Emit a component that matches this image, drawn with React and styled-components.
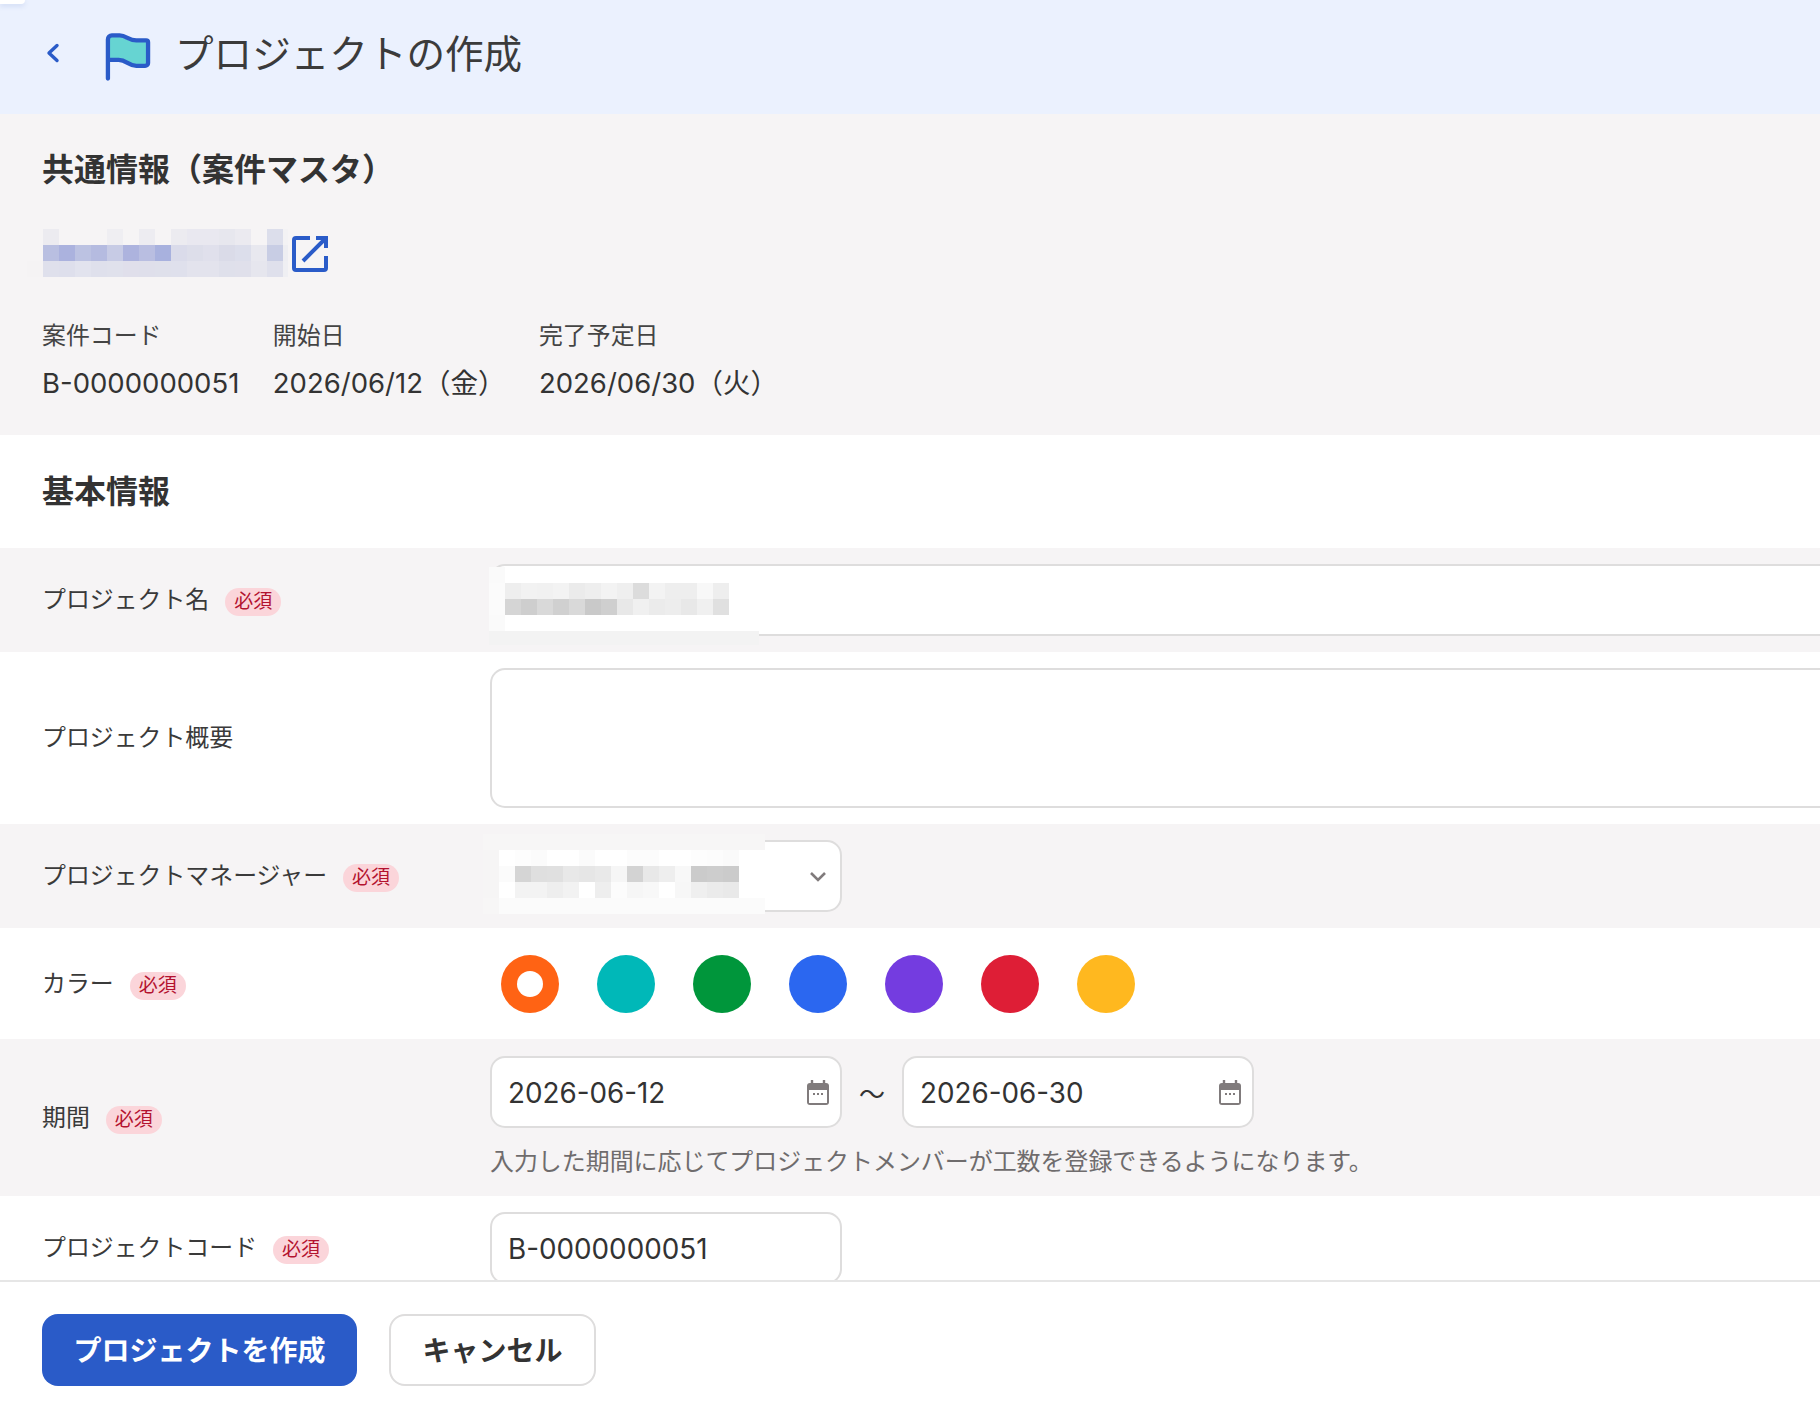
import React from "react";
import styled, { createGlobalStyle } from "styled-components";

const Global = createGlobalStyle`
  html, body { margin: 0; padding: 0; background: #fff; }
  body { font-family: Inter, "Noto Sans CJK JP", sans-serif; color: #333; }
  * { box-sizing: border-box; }
`;

const Page = styled.div`
  width: 1820px; height: 1412px; display: flex; flex-direction: column; overflow: hidden; position: relative;
`;
const Corner = styled.div`
  position: absolute; left: 0; top: 0; width: 25px; height: 4px; background: #fff;
  border-radius: 0 0 6px 0; box-shadow: 0 2px 5px rgba(80,110,190,.18);
`;
const Header = styled.header`
  flex: none; height: 114px; background: #ebf1fe; display: flex; align-items: center; padding-left: 46px;
`;
const Back = styled.svg`width: 14px; height: 20px; flex: none; margin-bottom: 8px;`;
const FlagIcon = styled.svg`width: 47px; height: 52px; margin-left: 44px; flex: none;`;
const Title = styled.h1`
  margin: 0 0 5px 24px; font-size: 38.6px; font-weight: 400; line-height: 1.4; color: #3b3b3b;
`;
const Scroll = styled.main`flex: 1; min-height: 0; overflow: hidden;`;
const Common = styled.section`background: #f6f4f5; padding: 35px 42px 34px;`;
const SectionTitle = styled.h2`
  margin: 0; font-size: 32px; font-weight: 700; line-height: 42px; color: #333;
`;
const LinkRow = styled.div`
  position: relative; height: 48px; margin-top: 38px; width: 290px;
`;
const ExtIcon = styled.svg`position: absolute; left: 250px; top: 7px; width: 36px; height: 36px;`;
const Mosaic = styled.svg`position: absolute; left: ${p => p.$x}px; top: ${p => p.$y}px; shape-rendering: crispEdges;`;
const Facts = styled.dl`display: flex; gap: 33.5px; margin: 40px 0 0;`;
const Fact = styled.div`display: flex; flex-direction: column; gap: 12px;`;
const FactLabel = styled.dt`font-size: 23.9px; line-height: 36px; color: #444; position: relative; top: 1px;`;
const FactValue = styled.dd`margin: 0; font-size: 27.5px; line-height: 36px; color: #333;`;
const Basic = styled.div`padding: 36px 42px 35px; background: #fff;`;
const Row = styled.div`
  position: relative; display: grid; grid-template-columns: 448px 1fr; align-items: center;
  padding: ${p => p.$pad || 16}px 0 ${p => p.$padB || p.$pad || 16}px 42px; overflow: hidden;
  background: ${p => (p.$tint ? "#f6f4f5" : "#fff")};
`;
const Label = styled.div`
  display: flex; align-items: center; gap: 16px; font-size: 23.9px; line-height: 36px; color: #3a3a3a;
`;
const Required = styled.span`
  display: inline-flex; align-items: center; justify-content: center; width: 56px; height: 28px;
  border-radius: 14px; background: #fbd5da; color: #b3122f; font-size: 19px; margin-top: 3px;
`;
const Input = styled.div`
  display: flex; align-items: center; justify-content: space-between; height: 72px;
  width: ${p => p.$w || 352}px; padding: 2px 10px 0 16px; font-size: 27.8px; color: #333;
  background: #fff; border: 2px solid #dedddd; border-radius: 15px; flex: none;
`;
const Textarea = styled(Input)`height: 140px;`;
const Swatches = styled.div`display: flex; gap: 38px; padding-left: 10.5px;`;
const Swatch = styled.div`
  width: 58px; height: 58px; border-radius: 50%; background: ${p => p.$c};
  display: flex; align-items: center; justify-content: center;
`;
const Dot = styled.div`width: 26px; height: 26px; border-radius: 50%; background: #fff;`;
const DateBlock = styled.div`display: flex; flex-direction: column;`;
const DateRow = styled.div`display: flex; align-items: center; gap: 17px;`;
const Tilde = styled.span`font-size: 26px; color: #333; width: 26px; text-align: center;`;
const Hint = styled.div`font-size: 23.95px; line-height: 36px; margin-top: 16px; color: #6f6c6d;`;
const CalIcon = styled.svg`width: 24px; height: 26px; flex: none;`;
const SelectChevron = styled.svg`width: 18px; height: 12px; flex: none; margin-right: 3px;`;
const Footer = styled.footer`
  flex: none; height: 132px; border-top: 2px solid #e6e6e6; background: #fff;
  display: flex; gap: 32px; padding: 32px 42px 0; align-items: flex-start; position: relative;
`;
const Button = styled.button`
  height: 72px; width: ${p => p.$w}px; border-radius: 16px; font-family: inherit; font-size: 28px; font-weight: 700;
  background: ${p => (p.$primary ? "#2a5bc8" : "#fff")}; color: ${p => (p.$primary ? "#fff" : "#333")};
  border: ${p => (p.$primary ? "none" : "2px solid #dedddd")}; padding: 0 0 2px;
`;

const _ = null;
const Cells = ({ rows, x, y, w, h, cell = 16 }) => (
  <Mosaic $x={x} $y={y} width={w} height={h} viewBox={`0 0 ${w} ${h}`}>
    {rows.map((r, j) => r.map((c, i) => c && <rect key={j + "-" + i} x={i * cell} y={j * cell} width={cell} height={cell} fill={c} />))}
  </Mosaic>
);

const W = "#ffffff", B = "#f6f4f5";
const linkRows = [
  [_, "#ecebf0", B, B, B, "#efeef2", B, "#edecf1", B, "#ecebf0", "#e9e8f0", "#e9e8f0", "#e7e7ee", "#ebeaf0", B, "#dcdeeb", "#f3f2f4"],
  [_, "#b9bfe1", "#abb2de", "#bcc2e2", "#b5bbe0", "#c7cbe5", "#adb3de", "#b9bee1", "#a8b1de", "#dadbea", "#dddeea", "#e0e0ec", "#dadbe8", "#dcdeeb", "#e8e8ef", "#c8cde4", "#eeeef2"],
  ["#f5f3f4", "#dfe0ec", "#dedfec", "#e2e3ee", "#dfe0ec", "#e0e1ec", "#e0dfeb", "#dfdfeb", "#dfe0eb", "#dfe0ec", "#e3e3ed", "#e3e3ed", "#dfe0eb", "#e0e0eb", "#e6e6ee", "#dfe0ec", "#efeff3"],
];
const fill = (n, c) => Array(n).fill(c);
const nameRows = [
  ["#fafafa", ...fill(16, W)],
  ["#fbfbfb", "#eeeeee", "#f2f2f2", "#f1f1f1", "#f3f3f3", "#ebebeb", "#eeeeee", "#f3f3f3", "#efefef", "#dcdcdc", "#f3f3f3", "#eeeeee", "#eeeeee", "#f8f8f8", "#eeeeee", W, W],
  ["#fbfbfb", "#d5d5d5", "#cecece", "#d9d9d9", "#d0d0d0", "#d9d9d9", "#c9c9c9", "#cfcfcf", "#e8e8e8", "#f0f0f0", "#ebebeb", "#ededed", "#e8e8e8", "#f0f0f0", "#e0e0e0", W, W],
  ["#fafafa", ...fill(16, W)],
  fill(17, "#f3f3f3"),
];
const pmRows = [
  fill(18, "#f7f6f6"),
  ["#f6f5f5", W, "#fdfdfd", "#fbfbfb", W, W, "#fbfbfb", W, W, "#fcfcfc", "#fcfcfc", W, W, "#fdfdfd", "#fcfcfc", "#fafafa", W, W],
  ["#f6f5f5", "#fbfbfb", "#d5d5d5", "#dfdfdf", "#e0e0e0", "#e8e8e8", "#e6e6e6", "#e9e9e9", "#f6f6f6", "#d3d3d3", "#e8e8e8", "#eeeeee", "#f8f8f8", "#cbcbcb", "#cdcdcd", "#cbcbcb", W, W],
  ["#f6f5f5", W, "#f3f3f3", "#f3f3f3", "#eeeeee", "#f2f2f2", W, "#eeeeee", "#fcfcfc", "#f6f6f6", "#f8f8f8", W, "#f7f7f7", "#efefef", "#ebebeb", "#e9e9e9", W, W],
  ["#f7f6f6", ...fill(17, "#fbfbfb")],
];

const Calendar = () => (
  <CalIcon viewBox="0 0 24 26">
    <path d="M6 0.5v3M18 0.5v3" stroke="#807b7c" strokeWidth="2.4" strokeLinecap="round" />
    <rect x="1" y="3" width="22" height="22" rx="3" fill="#807b7c" />
    <rect x="3" y="10" width="18" height="13" fill="#fff" />
    <path d="M7 14h2M11 14h2M15 14h2" stroke="#807b7c" strokeWidth="2" />
  </CalIcon>
);
const Req = () => <Required>必須</Required>;
const colors = ["#ff6314", "#00b8b8", "#00963b", "#2b67f0", "#743ce0", "#de1e36", "#ffb81f"];

export default function App() {
  return (
    <Page>
      <Global />
      <Corner />
      <Header>
        <Back viewBox="0 0 14 20">
          <path d="M11 2.5L3 10l8 7.5" fill="none" stroke="#2a5bc8" strokeWidth="3.4" strokeLinecap="round" strokeLinejoin="round" />
        </Back>
        <FlagIcon viewBox="0 0 48 52">
          <path d="M4 5h10c7 0 9 5 18 5h11a2 2 0 0 1 2 2v20a3 3 0 0 1-3 3H32c-8 0-10-6-18-6H4z" fill="#66d4d2" />
          <path d="M4 48V8a4 4 0 0 1 4-4h8c7 0 9 5 17 5h10a2 2 0 0 1 2 2v21a3 3 0 0 1-3 3H33c-8 0-10-6-18-6H4" fill="none" stroke="#2a5bc8" strokeWidth="4.4" strokeLinecap="round" strokeLinejoin="round" />
        </FlagIcon>
        <Title>プロジェクトの作成</Title>
      </Header>
      <Scroll>
        <Common>
          <SectionTitle>共通情報（案件マスタ）</SectionTitle>
          <LinkRow>
            <Cells rows={linkRows} x={-15} y={0} w={261} h={48} />
            <ExtIcon viewBox="0 0 36 36">
              <path d="M18 2H4a2 2 0 0 0-2 2v28a2 2 0 0 0 2 2h28a2 2 0 0 0 2-2V20" fill="none" stroke="#2a5bc8" strokeWidth="4" />
              <path d="M24 2h10v10M34 2L11 25" fill="none" stroke="#2a5bc8" strokeWidth="4" />
            </ExtIcon>
          </LinkRow>
          <Facts>
            <Fact><FactLabel>案件コード</FactLabel><FactValue>B-0000000051</FactValue></Fact>
            <Fact><FactLabel>開始日</FactLabel><FactValue>2026/06/12（金）</FactValue></Fact>
            <Fact><FactLabel>完了予定日</FactLabel><FactValue>2026/06/30（火）</FactValue></Fact>
          </Facts>
        </Common>
        <Basic><SectionTitle>基本情報</SectionTitle></Basic>
        <Row $tint>
          <Label>プロジェクト名<Req /></Label>
          <Input $w={1400} />
          <Cells rows={nameRows} x={489} y={19} w={270} h={78} />
        </Row>
        <Row>
          <Label>プロジェクト概要</Label>
          <Textarea $w={1400} />
        </Row>
        <Row $tint>
          <Label>プロジェクトマネージャー<Req /></Label>
          <Input>
            <span />
            <SelectChevron viewBox="0 0 18 12">
              <path d="M2 2l7 7 7-7" fill="none" stroke="#807b7c" strokeWidth="2.6" />
            </SelectChevron>
          </Input>
          <Cells rows={pmRows} x={483} y={10} w={282} h={80} />
        </Row>
        <Row $pad={27} $padB={26}>
          <Label>カラー<Req /></Label>
          <Swatches>
            {colors.map((c, i) => <Swatch key={c} $c={c}>{i === 0 && <Dot />}</Swatch>)}
          </Swatches>
        </Row>
        <Row $tint $pad={17} $padB={16}>
          <Label>期間<Req /></Label>
          <DateBlock>
            <DateRow>
              <Input>2026-06-12<Calendar /></Input>
              <Tilde>〜</Tilde>
              <Input>2026-06-30<Calendar /></Input>
            </DateRow>
            <Hint>入力した期間に応じてプロジェクトメンバーが工数を登録できるようになります。</Hint>
          </DateBlock>
        </Row>
        <Row>
          <Label>プロジェクトコード<Req /></Label>
          <Input>B-0000000051</Input>
        </Row>
      </Scroll>
      <Footer>
        <Button $primary $w={315}>プロジェクトを作成</Button>
        <Button $w={207}>キャンセル</Button>
      </Footer>
    </Page>
  );
}
